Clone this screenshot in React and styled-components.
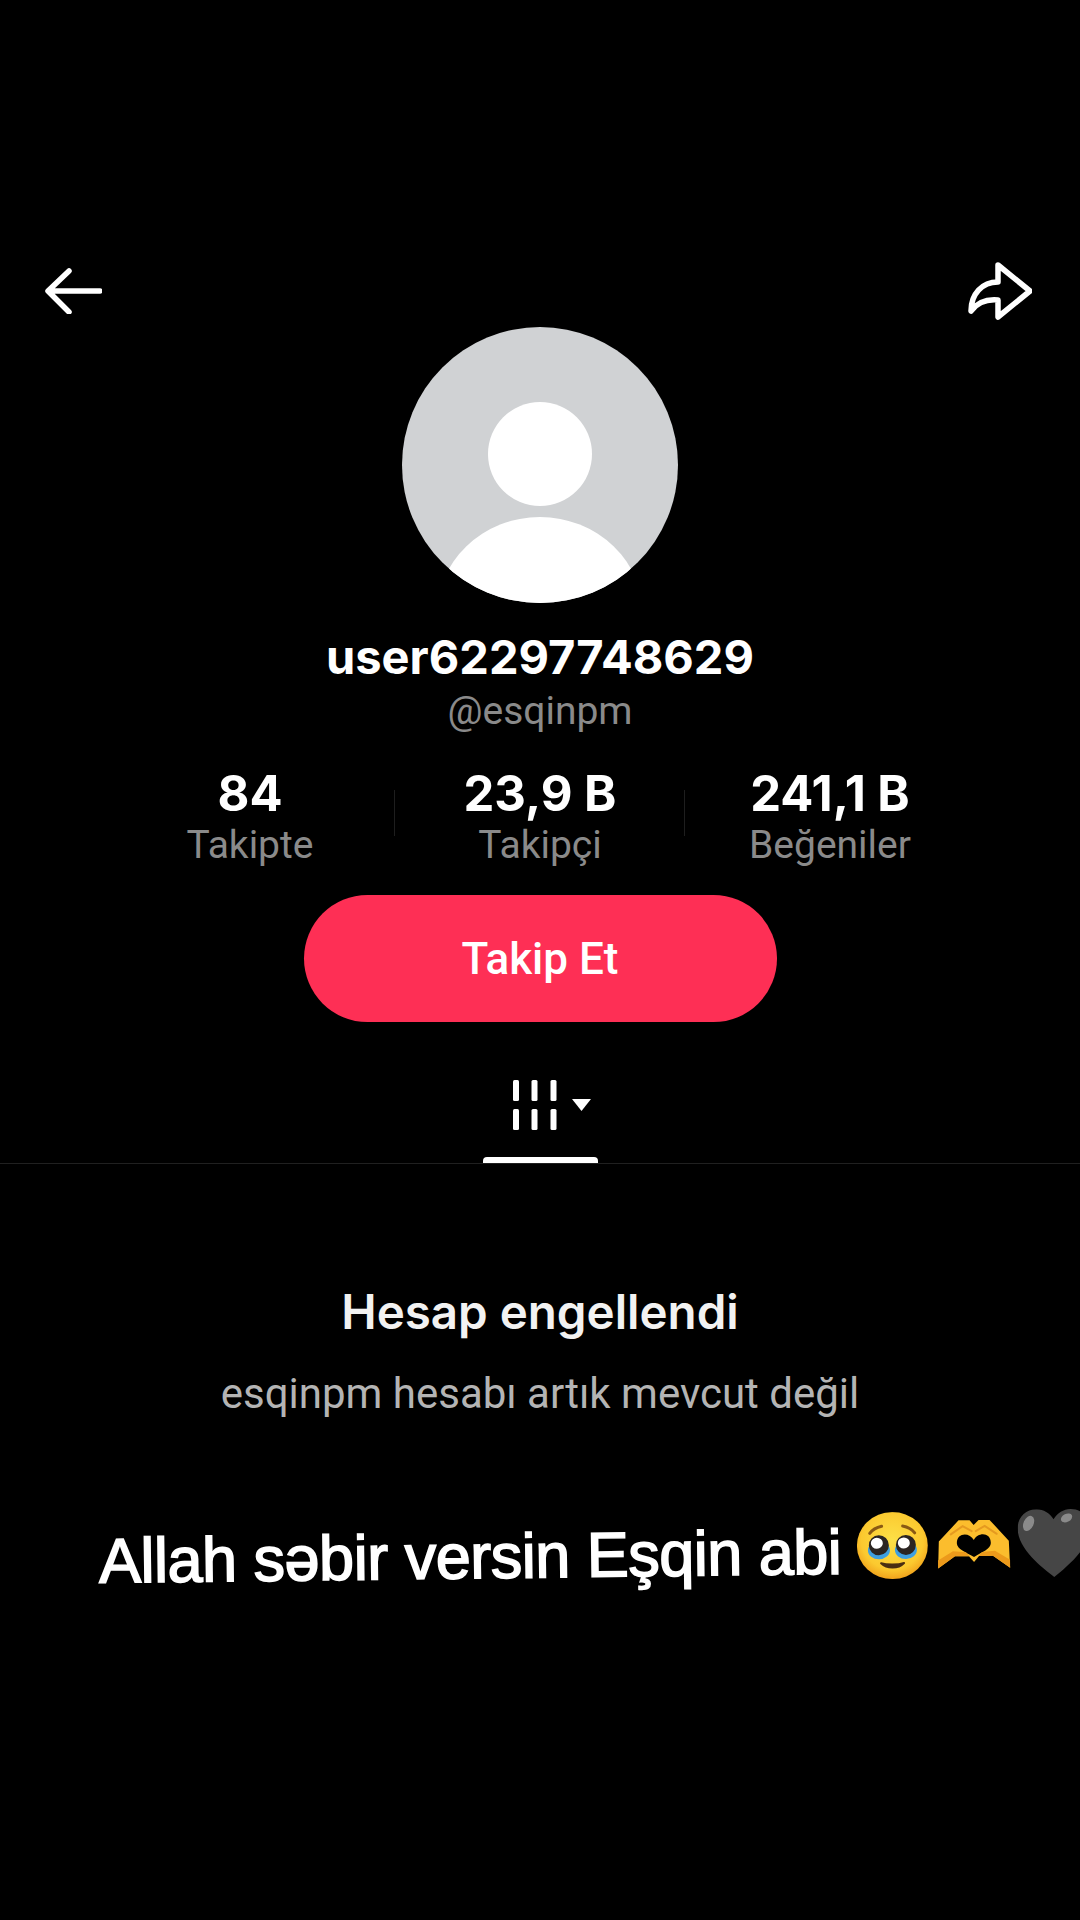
import styled, { createGlobalStyle } from "styled-components";

const GlobalStyle = createGlobalStyle`
  html, body {
    margin: 0;
    background: #000;
  }
`;

const Page = styled.div`
  width: 1080px;
  height: 1920px;
  overflow: hidden;
  background: #000;
  color: #fff;
  display: flex;
  flex-direction: column;
  font-family: Inter, "Noto Sans", sans-serif;
`;

const TopBar = styled.div`
  display: flex;
  justify-content: space-between;
  align-items: center;
  height: 58px;
  margin-top: 262px;
  padding: 0 48px 0 45px;
`;

const Avatar = styled.svg`
  display: block;
  width: 276px;
  height: 276px;
  margin: 7px auto 0;
`;

const Name = styled.div`
  margin-top: 24px;
  text-align: center;
  font-size: 47px;
  line-height: 60px;
  font-weight: 700;
`;

const Handle = styled.div`
  margin-top: 1px;
  text-align: center;
  font-family: Roboto, sans-serif;
  font-size: 39px;
  line-height: 46px;
  color: #8a8a8a;
`;

const Stats = styled.div`
  display: grid;
  grid-template-columns: repeat(3, 290px);
  justify-content: center;
  margin-top: 32px;
`;

const Stat = styled.div`
  position: relative;
  text-align: center;

  &:not(:last-child)::after {
    content: "";
    position: absolute;
    right: 0;
    top: 24px;
    width: 1px;
    height: 46px;
    background: #1e1e1e;
  }
`;

const StatValue = styled.div`
  font-size: 49px;
  line-height: 56px;
  font-weight: 700;
`;

const StatLabel = styled.div`
  font-family: Roboto, sans-serif;
  font-size: 39px;
  line-height: 46px;
  color: #8a8a8a;
`;

const FollowButton = styled.button`
  display: block;
  width: 473px;
  height: 127px;
  margin: 27px auto 0;
  border: 0;
  border-radius: 64px;
  background: #fe2f55;
  color: #fff;
  font-family: Roboto, sans-serif;
  font-size: 44px;
  font-weight: 500;
`;

const Tabs = styled.div`
  position: relative;
  display: flex;
  justify-content: center;
  height: 141px;
  border-bottom: 1px solid #202020;
`;

const TabIcon = styled.svg`
  width: 78px;
  height: 50px;
  margin: 58px 0 0 24px;
`;

const TabIndicator = styled.div`
  position: absolute;
  left: 483px;
  bottom: 0;
  width: 115px;
  height: 6px;
  border-radius: 4px 4px 0 0;
  background: #fff;
`;

const Notice = styled.div`
  margin-top: 118px;
  text-align: center;
`;

const NoticeTitle = styled.div`
  font-size: 47.5px;
  line-height: 60px;
  font-weight: 600;
  color: #f2f2f2;
`;

const NoticeText = styled.div`
  margin-top: 27px;
  font-family: Roboto, sans-serif;
  font-size: 42px;
  line-height: 50px;
  color: #b4b4b4;
`;

const Caption = styled.div`
  display: flex;
  align-items: center;
  margin-top: 108px;
  padding-left: 99px;
  white-space: nowrap;
  font-family: "Liberation Sans", Arial, sans-serif;
  font-size: 63px;
  line-height: 70px;
  font-weight: 400;
  letter-spacing: -0.5px;
  -webkit-text-stroke: 1.6px #fff;
  transform: rotate(-0.7deg);
  transform-origin: 0 50%;
`;

const Emojis = styled.div`
  display: flex;
  align-items: center;
  flex: none;
  margin-left: 16px;
  transform: translateY(-6px);
`;

const Emoji = styled.svg`
  flex: none;
  display: block;
  margin-left: ${(p) => p.$gap || 0}px;
`;

function BackIcon() {
  return (
    <svg width="57" height="46" viewBox="0 0 57 46" fill="none" stroke="#fff" strokeWidth="5.5" strokeLinecap="round" strokeLinejoin="round">
      <path d="M24 3 3 23l21 21M4 23h51" />
    </svg>
  );
}

function ShareIcon() {
  return (
    <svg width="65" height="58" viewBox="0 0 65 58" fill="none" stroke="#fff" strokeWidth="5.5" strokeLinejoin="round">
      <path d="M31 3 63 29 31 55V38C20 37 10 41 4 49 4 32 15 20 31 20Z" />
    </svg>
  );
}

function PleadingFace() {
  return (
    <Emoji width="71" height="67" viewBox="0 0 71 67" role="img" aria-label="yüz">
      <defs>
        <radialGradient id="face" cx="50%" cy="42%" r="58%">
          <stop offset="0" stopColor="#fde047" />
          <stop offset="0.75" stopColor="#fbc92f" />
          <stop offset="1" stopColor="#f1a31c" />
        </radialGradient>
      </defs>
      <ellipse cx="35.5" cy="33.5" rx="35.5" ry="33.5" fill="url(#face)" />
      <path d="M13 21C16 17 20 15 25 14M58 21C55 17 51 15 46 14" stroke="#8a5a14" strokeWidth="3" strokeLinecap="round" fill="none" />
      <ellipse cx="22" cy="38" rx="11" ry="9" fill="#3f9fe0" />
      <ellipse cx="49" cy="38" rx="11" ry="9" fill="#3f9fe0" />
      <ellipse cx="22" cy="33" rx="10" ry="10" fill="#2b2522" />
      <ellipse cx="49" cy="33" rx="10" ry="10" fill="#2b2522" />
      <ellipse cx="20" cy="31" rx="6" ry="5.5" fill="#fff" />
      <ellipse cx="47" cy="31" rx="6" ry="5.5" fill="#fff" />
      <path d="M24 51C30 57 41 57 47 51 41 53 30 53 24 51Z" fill="#4a2f12" stroke="#4a2f12" strokeWidth="2" strokeLinejoin="round" />
    </Emoji>
  );
}

function HeartHands() {
  return (
    <Emoji $gap={9} width="74" height="50" viewBox="0 0 74 50" role="img" aria-label="kalp eller">
      <path
        fillRule="evenodd"
        fill="#fbbd2d"
        d="M1 49 2 22 22 1 33 1 37 6 42 1 53 1 72 22 73 49 56 37 42 37 37 43 32 37 18 37ZM37 21C33 13 20 13 20 24 20 30 29 33 37 38 45 33 54 30 54 24 54 13 41 13 37 21Z"
      />
      <path d="M1 49 1 41 16 32 29 33 37 43 45 33 58 32 73 41 73 49 56 37 42 37 37 43 32 37 18 37Z" fill="#ec9a1b" />
      <path d="M14 15 26 7 35 12M60 15 48 7 39 12" stroke="#e59a20" strokeWidth="2" fill="none" strokeLinecap="round" />
    </Emoji>
  );
}

function BlackHeart() {
  return (
    <Emoji $gap={7} width="72" height="68" viewBox="0 0 72 68" role="img" aria-label="siyah kalp">
      <path d="M36 68C24 58 0 40 0 19 0 8 8 0 19 0 26 0 32 4 36 10 40 4 46 0 53 0 64 0 72 8 72 19 72 40 48 58 36 68Z" fill="#464646" />
      <ellipse cx="11" cy="14" rx="5" ry="8" transform="rotate(25 11 14)" fill="#8a8a8a" />
      <ellipse cx="49" cy="9" rx="6" ry="4" transform="rotate(-25 49 9)" fill="#8a8a8a" />
    </Emoji>
  );
}

const stats = [
  { value: "84", label: "Takipte" },
  { value: "23,9 B", label: "Takipçi" },
  { value: "241,1 B", label: "Beğeniler" },
];

export default function App() {
  return (
    <Page>
      <GlobalStyle />
      <TopBar>
        <BackIcon />
        <ShareIcon />
      </TopBar>

      <Avatar viewBox="0 0 276 276">
        <defs>
          <clipPath id="avatar-clip">
            <circle cx="138" cy="138" r="138" />
          </clipPath>
        </defs>
        <circle cx="138" cy="138" r="138" fill="#d0d2d4" />
        <circle cx="138" cy="127" r="52" fill="#fff" />
        <ellipse cx="138" cy="290" rx="104" ry="100" fill="#fff" clipPath="url(#avatar-clip)" />
      </Avatar>

      <Name>user62297748629</Name>
      <Handle>@esqinpm</Handle>

      <Stats>
        {stats.map((stat) => (
          <Stat key={stat.label}>
            <StatValue>{stat.value}</StatValue>
            <StatLabel>{stat.label}</StatLabel>
          </Stat>
        ))}
      </Stats>

      <FollowButton>Takip Et</FollowButton>

      <Tabs>
        <TabIcon viewBox="0 0 78 50" fill="#fff">
          <rect x="0" y="0" width="6" height="21" rx="1.5" />
          <rect x="18.5" y="0" width="6" height="21" rx="1.5" />
          <rect x="37.5" y="0" width="6" height="21" rx="1.5" />
          <rect x="0" y="29" width="6" height="21" rx="1.5" />
          <rect x="18.5" y="29" width="6" height="21" rx="1.5" />
          <rect x="37.5" y="29" width="6" height="21" rx="1.5" />
          <path d="M59 19h19l-9.5 12z" />
        </TabIcon>
        <TabIndicator />
      </Tabs>

      <Notice>
        <NoticeTitle>Hesap engellendi</NoticeTitle>
        <NoticeText>esqinpm hesabı artık mevcut değil</NoticeText>
      </Notice>

      <Caption>
        Allah səbir versin Eşqin abi
        <Emojis>
          <PleadingFace />
          <HeartHands />
          <BlackHeart />
        </Emojis>
      </Caption>
    </Page>
  );
}
